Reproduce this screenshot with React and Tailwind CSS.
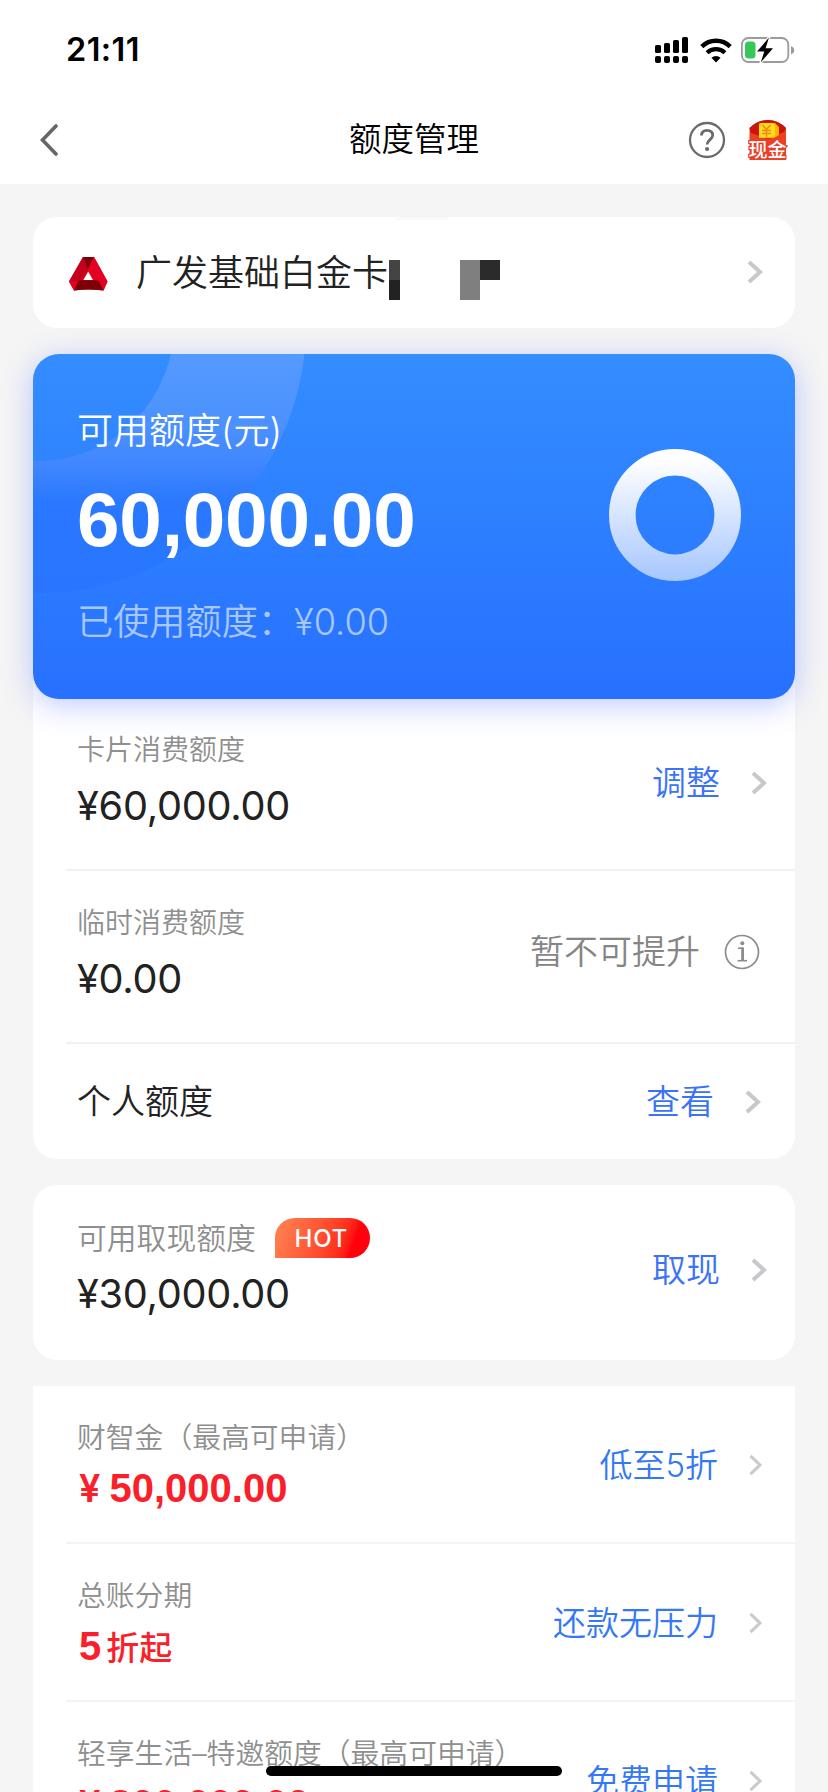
import clsx from 'clsx'

const Chevron = ({ thin }) =>
  thin ? (
    <svg width="14" height="22" viewBox="0 0 14 22" fill="none" stroke="#c9c9ce" strokeWidth="3">
      <path d="M1.5 1.8 11 11 1.5 20.2" />
    </svg>
  ) : (
    <svg width="16" height="24" viewBox="0 0 16 24" fill="none" stroke="#c7c7cc" strokeWidth="4">
      <path d="M2 2 13 12 2 22" />
    </svg>
  )

const StatusBar = () => (
  <div className="flex h-[88px] items-center justify-between pt-3 pr-[33px] pl-[66px]">
    <span className="text-[32.5px] leading-10 font-semibold tracking-[0.4px] text-black">21:11</span>
    <div className="flex items-center">
      <svg width="33" height="26" viewBox="0 0 33 26">
        <rect x="0" y="8" width="6" height="8" rx="1.5" />
        <rect x="9" y="6" width="6" height="10" rx="1.5" />
        <rect x="18" y="3" width="6" height="13" rx="1.5" />
        <rect x="27" y="0" width="6" height="16" rx="1.5" />
        <rect x="0" y="19" width="6" height="7" rx="2" />
        <rect x="9" y="19" width="6" height="7" rx="2" />
        <rect x="18" y="19" width="6" height="7" rx="2" />
        <rect x="27" y="19" width="6" height="7" rx="2" />
      </svg>
      <svg className="ml-3" width="32" height="25" viewBox="0 0 32 25" fill="none" stroke="#000">
        <path d="M1.8 8.6a20.3 20.3 0 0 1 28.4 0" strokeWidth="4.4" />
        <path d="M7.1 14.7a12.8 12.8 0 0 1 17.8 0" strokeWidth="4.2" />
        <path d="M16 24.5 11.4 19.8a6.6 6.6 0 0 1 9.2 0Z" fill="#000" stroke="none" />
      </svg>
      <svg className="ml-[9px]" width="54" height="26" viewBox="0 0 54 26">
        <rect x="0.9" y="1" width="46.4" height="24" rx="6.5" fill="#fff" stroke="#9b9b9b" strokeWidth="1.8" />
        <rect x="4" y="4.5" width="10.5" height="17" rx="3.5" fill="#34c759" />
        <path d="M50 9v8.5c2-.6 3.2-2.3 3.2-4.2S52 9.6 50 9Z" fill="#9b9b9b" />
        <path
          d="M28 .6 16 14.6h7.3l-3.6 10.8L32 11.2h-7.4Z"
          fill="#000"
          stroke="#fff"
          strokeWidth="2.4"
          strokeLinejoin="round"
          paintOrder="stroke"
        />
      </svg>
    </div>
  </div>
)

const CashIcon = () => (
  <svg width="40" height="40" viewBox="0 0 40 40">
    <path d="M1.5 8Q10 0 20 0t18 8v32H1.5Z" fill="#ee3f22" />
    <path d="M1.5 8Q10 0 20 0t18 8l-2 4-16 7L3 13Z" fill="#c9150f" />
    <path d="M11 5q0-2 2-2h14l4 4v8l-5 3H11Z" fill="#ffb800" />
    <path d="M11 5q0-2 2-2h12l2 3v11H11Z" fill="#ffdb1c" />
    <path d="m14.5 5 4 4.5 4-4.5M14 10.5h9M14 13.5h9M18.5 9.5v7.5" fill="none" stroke="#f08a1d" strokeWidth="1.5" />
    <text
      x="19.5"
      y="36.5"
      textAnchor="middle"
      className="text-[19px] font-medium"
      fill="#fff"
      stroke="#e8402c"
      strokeWidth="2.5"
      paintOrder="stroke"
    >
      现金
    </text>
  </svg>
)

const NavBar = () => (
  <div className="grid h-24 grid-cols-3 items-center pt-2 pr-10 pl-10">
    <svg width="18" height="32" viewBox="0 0 18 32" fill="none" stroke="#666" strokeWidth="3.6" strokeLinecap="round">
      <path d="M16 2 2.5 16 16 30" />
    </svg>
    <h1 className="text-center text-[32.5px] leading-10 text-black">额度管理</h1>
    <div className="flex items-center justify-end">
      <svg width="38" height="38" viewBox="0 0 38 38" fill="none" stroke="#6b6b6b">
        <circle cx="19" cy="19" r="17" strokeWidth="2.3" />
        <path d="M13.5 14.5c0-3.4 2.3-5.2 5.6-5.2s5.6 1.9 5.6 5c0 4.2-5.6 4.5-5.6 9.3" strokeWidth="2.8" />
        <circle cx="19.1" cy="28" r="2.1" fill="#6b6b6b" stroke="none" />
      </svg>
      <div className="ml-[22px]">
        <CashIcon />
      </div>
    </div>
  </div>
)

const BankLogo = () => (
  <svg width="39" height="35" viewBox="0 0 39 35">
    <path d="M14 0h11l13.5 24.5-4 9Q19.5 31.5 5 33.5L0 24.5Z" fill="#d9001b" />
    <path d="M14 0 0 24.5l12.5-1.3L19 12Z" fill="#c4001a" />
    <path d="M14 0h11l-6 12Z" fill="#7d0008" />
    <path d="M25 0 19 12l6.5 11.2 13 1.3Z" fill="#e60023" />
    <path d="m8 24 4.5-.8h13l5.5.8 3.5 9.5Q19.5 31.5 5 33.5Z" fill="#7d0008" />
    <path d="m0 24.5 9-.6L5 33.5ZM38.5 24.5l-8.500-.6 4.500 9.600Z" fill="#e60023" />
    <path d="m19.2 14.5 4.8 8.5H14.4Z" fill="#fff" />
  </svg>
)

// masked digits of the card number
const CardMask = () => (
  <svg className="mt-[14px] ml-px" width="111" height="40" shapeRendering="crispEdges">
    <rect width="11" height="20" fill="#444" />
    <rect y="20" width="11" height="20" fill="#222" />
    <rect x="71" width="20" height="40" fill="#7f7f7f" />
    <rect x="91" width="20" height="20" fill="#2b2b2b" />
  </svg>
)

const CardSelector = () => (
  <div className="relative flex h-[111px] items-center rounded-[24px] bg-white pr-[32px] pl-9">
    <span className="absolute top-0 left-[363px] h-[3px] w-[52px] bg-[#f9f9f9]" />
    <div className="mt-[3px]">
      <BankLogo />
    </div>
    <span className="ml-[28px] text-[36px] leading-[48px] text-[#222]">广发基础白金卡</span>
    <CardMask />
    <div className="mb-px ml-auto">
      <Chevron />
    </div>
  </div>
)

const LimitPanel = () => (
  <div className="relative z-10 flex h-[345px] items-start justify-between rounded-[26px] bg-linear-to-b from-[#348dff] to-[#2870ff] pr-[54px] pl-[44px] shadow-[0_6px_30px_rgba(70,100,255,0.34)]">
    <svg className="absolute top-0 left-0 rounded-tl-[26px]" width="290" height="250" viewBox="0 0 290 250">
      <defs>
        <linearGradient id="arc" gradientUnits="userSpaceOnUse" x1="0" y1="0" x2="0" y2="240">
          <stop offset="0" stopColor="#559aff" />
          <stop offset="0.28" stopColor="#4c92ff" />
          <stop offset="0.46" stopColor="#4086ff" />
          <stop offset="0.62" stopColor="#2a78ff" />
          <stop offset="1" stopColor="#2975ff" />
        </linearGradient>
      </defs>
      <circle cx="5" cy="-29" r="202" fill="none" stroke="url(#arc)" strokeWidth="132" />
    </svg>
    <div className="relative text-white">
      <div className="mt-[53px] text-[36px] leading-[48px]">可用额度(元)</div>
      <div className="mt-[21px] font-['Liberation_Sans',sans-serif] text-[76.5px] leading-[88px] font-bold tracking-[-0.2px]">
        60,000.00
      </div>
      <div className="mt-[34px] text-[36.2px] leading-[48px] text-white/60">已使用额度：¥0.00</div>
    </div>
    <svg className="mt-[95px]" width="132" height="132" viewBox="0 0 132 132">
      <defs>
        <linearGradient id="ring" gradientUnits="userSpaceOnUse" x1="0" y1="0" x2="0" y2="132">
          <stop offset="0.08" stopColor="#fff" />
          <stop offset="1" stopColor="#a6c6ff" />
        </linearGradient>
      </defs>
      <circle cx="66" cy="66" r="52.7" fill="none" stroke="url(#ring)" strokeWidth="26.6" />
    </svg>
  </div>
)

const InfoIcon = () => (
  <svg width="36" height="36" viewBox="0 0 36 36" fill="none" stroke="#8c8c8c">
    <circle cx="18" cy="18" r="16.5" strokeWidth="1.7" />
    <circle cx="18.3" cy="9.3" r="2" fill="#8c8c8c" stroke="none" />
    <path d="M14 14.2h5" strokeWidth="1.6" />
    <path d="M18.6 13.5V26.5" strokeWidth="2.8" />
    <path d="M13.5 26.7h9.5" strokeWidth="1.6" />
  </svg>
)

const LimitRow = ({ label, amount, badge, action, className }) => (
  <div className={clsx('flex justify-between border-[#f1f1f3] pl-[11px]', className)}>
    <div>
      <div className="flex items-center">
        {label}
        {badge}
      </div>
      <div className="mt-3 text-[39.7px] leading-[48px] font-normal tracking-[-0.25px] text-[#222]">{amount}</div>
    </div>
    {action}
  </div>
)

const LimitList = () => (
  <div className="-mt-[30px] rounded-b-[24px] bg-white pt-[30px] pl-[33px]">
    <LimitRow
      className="h-[172px] border-b-2 pt-[31px]"
      label={<span className="text-[28px] leading-10 text-[#8f8f8f]">卡片消费额度</span>}
      amount="¥60,000.00"
      action={
        <div className="mt-[33px] mr-[28px] flex h-10 items-center gap-[31px] text-[34px] leading-10 text-[#3a72f8]">
          调整
          <Chevron />
        </div>
      }
    />
    <LimitRow
      className="h-[173px] border-b-2 pt-[32px]"
      label={<span className="text-[28px] leading-10 text-[#8f8f8f]">临时消费额度</span>}
      amount="¥0.00"
      action={
        <div className="mt-[29px] mr-[35px] flex h-10 items-center gap-[24px] text-[34px] leading-10 text-[#858585]">
          暂不可提升
          <InfoIcon />
        </div>
      }
    />
    <div className="flex h-[115px] items-center justify-between pr-[34px] pl-[11px] text-[34px] leading-10">
      <span className="text-[#222]">个人额度</span>
      <div className="flex items-center gap-[31px] text-[#3a72f8]">
        查看
        <Chevron />
      </div>
    </div>
  </div>
)

const CashLimit = () => (
  <div className="mt-[26px] h-[175px] rounded-[24px] bg-white pl-[33px]">
    <LimitRow
      className="pt-[33px]"
      label={<span className="text-[29.8px] leading-10 text-[#8f8f8f]">可用取现额度</span>}
      badge={
        <span className="ml-[19px] flex h-10 w-[95px] items-center justify-center rounded-[20px] rounded-bl-none bg-linear-110 from-[#ff7a4c] from-10% to-[#ff000c] to-80% pt-[2px] pr-[2px] text-[24px] font-medium tracking-[0.8px] text-white">
          HOT
        </span>
      }
      amount="¥30,000.00"
      action={
        <div className="mt-[32px] mr-[28px] flex h-10 items-center gap-[31px] text-[34px] leading-10 text-[#3a72f8]">
          取现
          <Chevron />
        </div>
      }
    />
  </div>
)

const offers = [
  {
    name: '财智金（最高可申请）',
    value: (
      <>
        <span className="mr-[9px] font-['Inter'] text-[38px] font-semibold">¥</span>50,000.00
      </>
    ),
    action: '低至5折',
  },
  {
    name: '总账分期',
    value: (
      <>
        5<span className="ml-[5px] font-['Noto_Sans_CJK_SC'] text-[33px] font-medium">折起</span>
      </>
    ),
    action: '还款无压力',
  },
  {
    name: '轻享生活–特邀额度（最高可申请）',
    value: (
      <>
        <span className="mr-[9px] font-['Inter'] text-[38px] font-semibold">¥</span>300,000.00
      </>
    ),
    action: '免费申请',
  },
]

const OfferList = () => (
  <div className="mt-[26px] bg-white pl-[33px]">
    {offers.map((offer) => (
      <div key={offer.name} className="flex h-[158px] justify-between border-b-2 border-[#f3f3f5] pr-[32px] pl-[11px]">
        <div className="pt-[32px]">
          <div className="text-[28.8px] leading-10 text-[#8f8f8f]">{offer.name}</div>
          <div className="mt-[8px] pl-[2px] font-['Liberation_Sans','Noto_Sans_CJK_SC',sans-serif] text-[40px] leading-[44px] font-bold whitespace-nowrap text-[#f91f2b]">
            {offer.value}
          </div>
        </div>
        <div className="mt-[59px] flex h-10 items-center gap-[31px] text-[33px] leading-10 text-[#3478f6]">
          {offer.action}
          <Chevron thin />
        </div>
      </div>
    ))}
  </div>
)

const App = () => {
  return (
    <div className="relative h-[1792px] w-[828px] overflow-hidden bg-[#f5f5f5] font-['Inter','Noto_Sans_CJK_SC',sans-serif] font-[350]">
      <header className="h-[184px] bg-white">
        <StatusBar />
        <NavBar />
      </header>

      <main className="px-[33px] pt-[33px]">
        <CardSelector />
        <div className="mt-[26px]">
          <LimitPanel />
          <LimitList />
        </div>
        <CashLimit />
        <OfferList />
      </main>

      <div className="absolute bottom-4 left-[266px] h-[10px] w-[296px] rounded-full bg-black" />
    </div>
  )
}

export default App
